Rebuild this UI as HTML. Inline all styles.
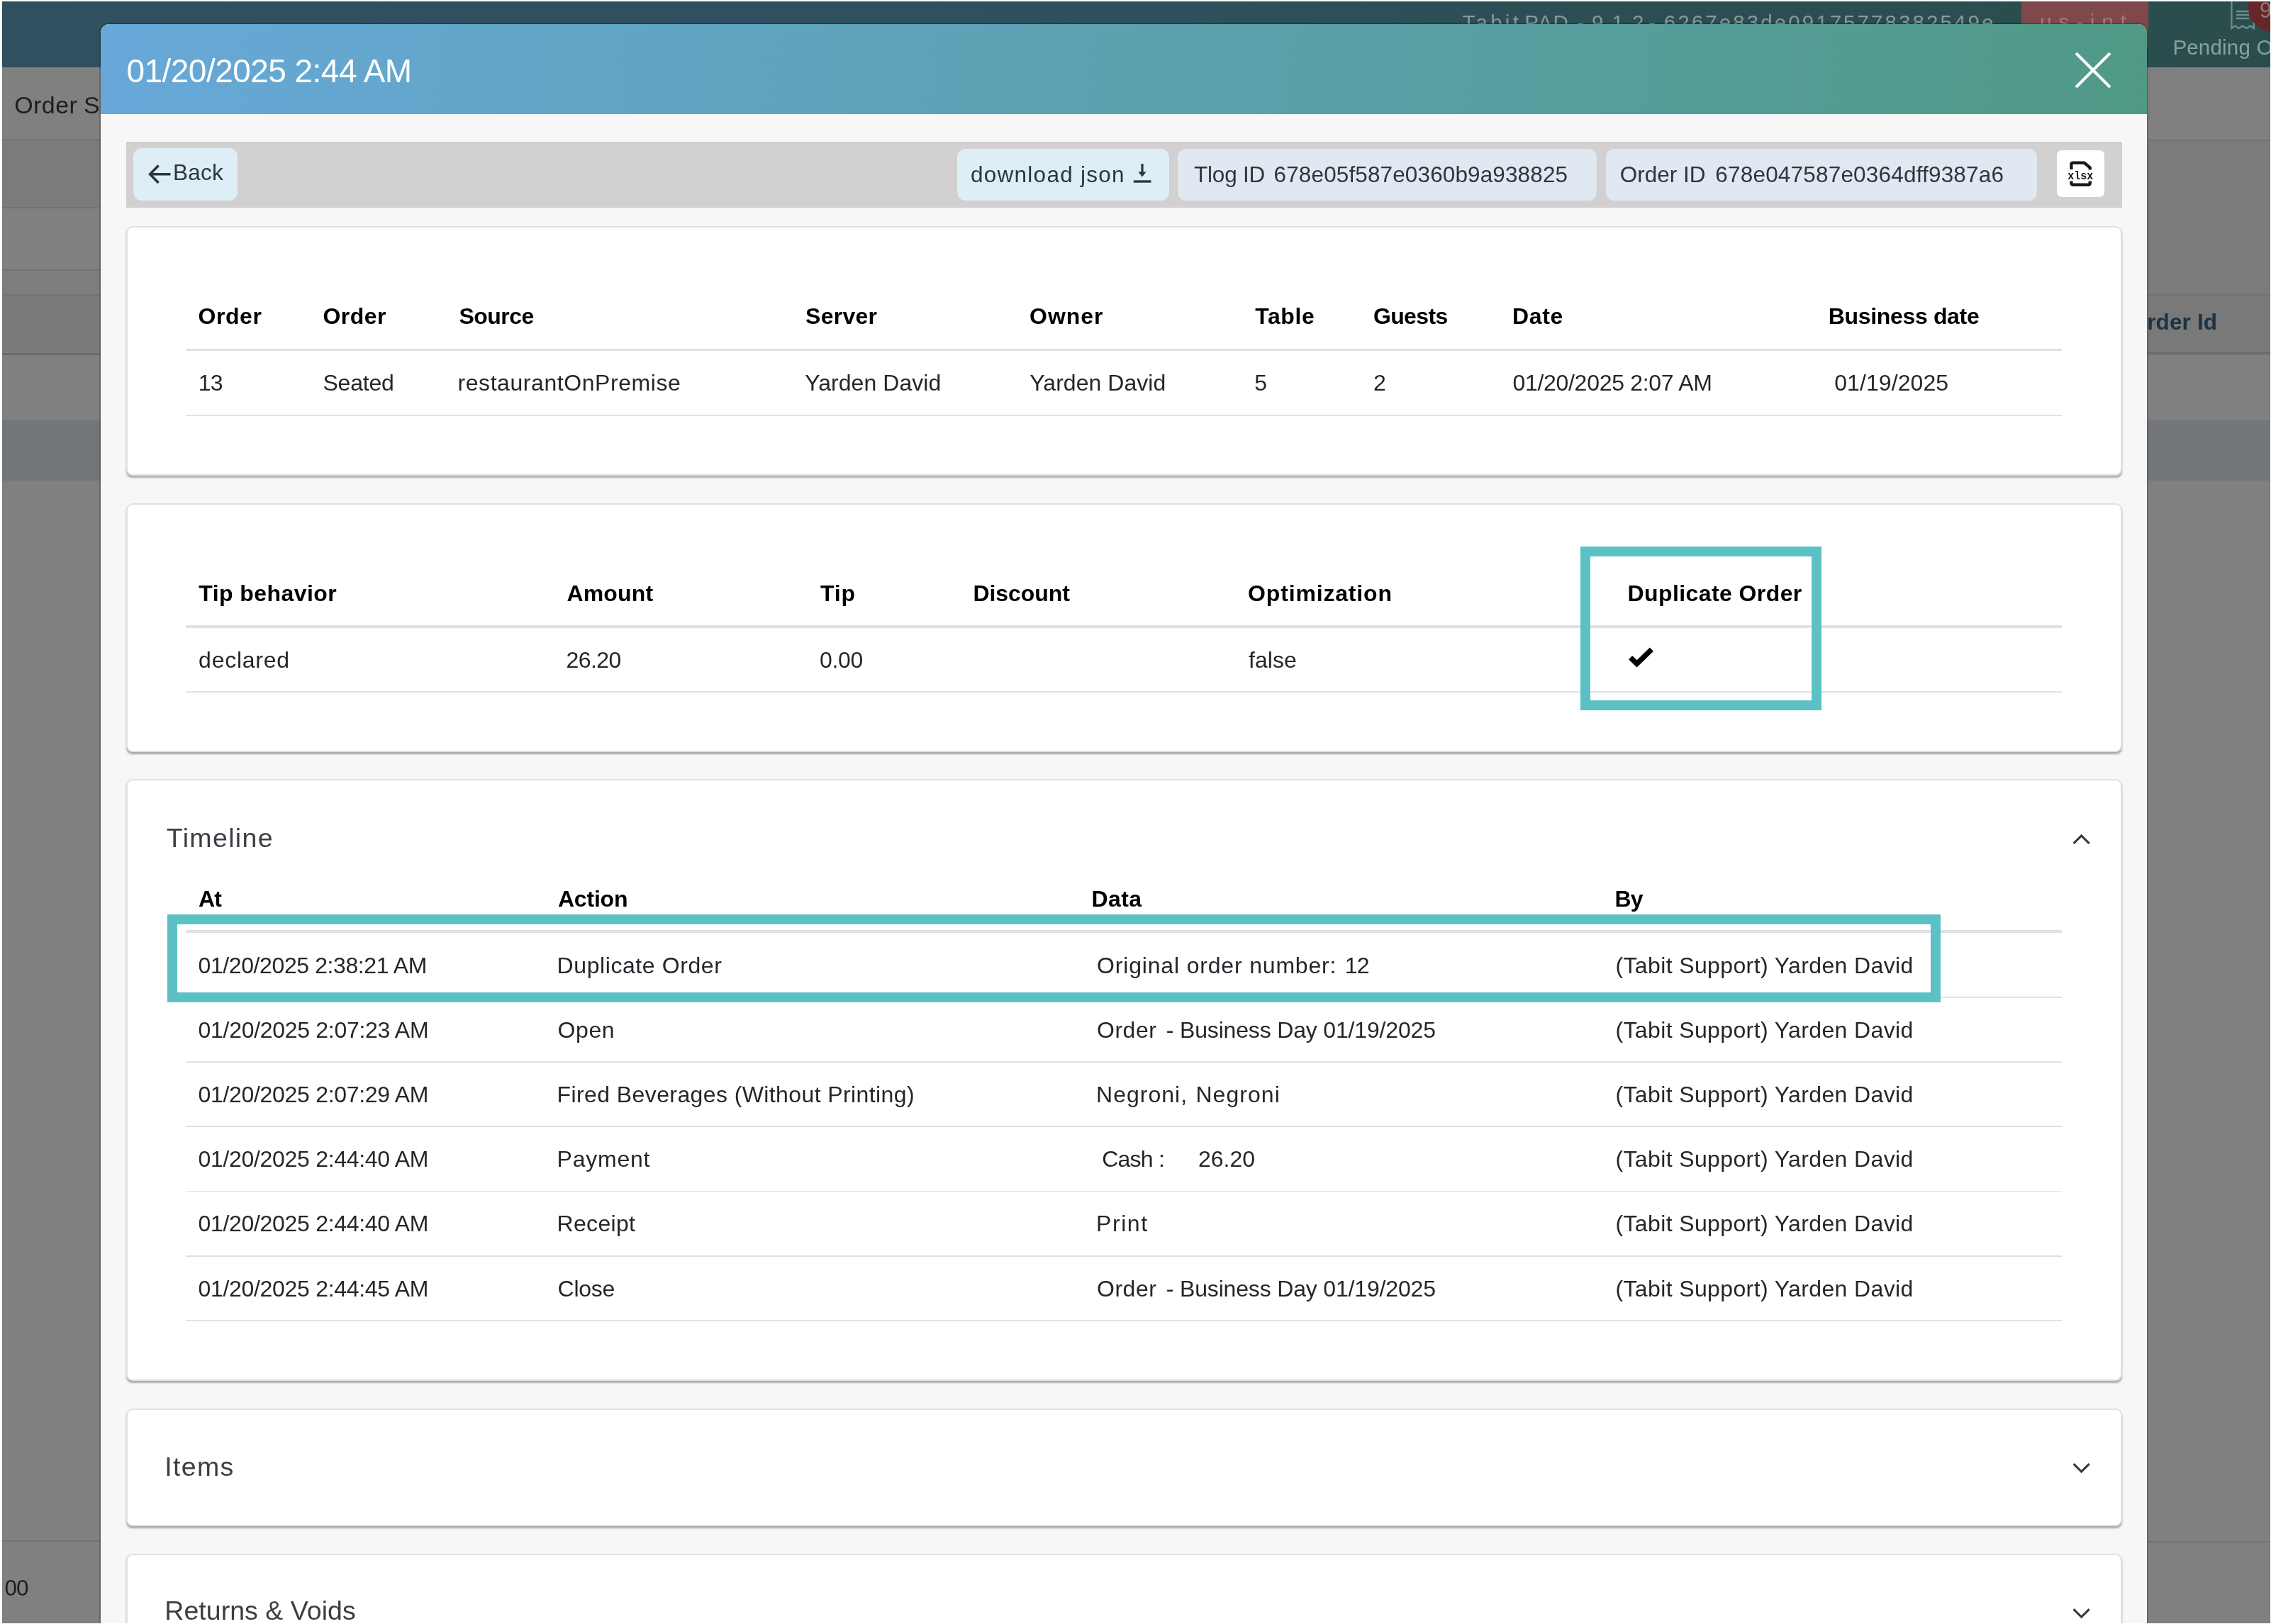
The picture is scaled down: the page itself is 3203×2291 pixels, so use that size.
<!DOCTYPE html>
<html lang="en"><head><meta charset="utf-8"><title>Order details</title>
<style>
html,body{margin:0;padding:0;background:#fff;}
body{width:3203px;height:2291px;position:relative;font-family:"Liberation Sans",sans-serif;}
#clip{position:absolute;left:3px;top:2px;width:3199px;height:2288px;overflow:hidden;}
#wrap{position:absolute;left:-3px;top:-2px;width:3203px;height:2291px;will-change:transform;}
.b{position:absolute;box-sizing:border-box;}
.t{position:absolute;white-space:pre;line-height:1;font-size:32px;color:#23272b;}
.bd{font-weight:700;color:#000;}
.mono{font-family:"Liberation Mono",monospace;}
.modal{background:#f7f7f7;border-radius:12px 12px 0 0;box-shadow:0 0 0 2px rgba(0,0,0,.2);}
.mhead{background:linear-gradient(93deg,#67a8d9 0%,#519986 100%);border-radius:12px 12px 0 0;}
.pill{border-radius:12px;}
.card{background:#fff;border:2px solid #e1e1e1;border-radius:9px;box-shadow:0 2.6px 2.4px -0.4px rgba(0,0,0,.31);}
.hl{border:14px solid #5bc1c4;}
.tb{color:#2f353b;}
.sec{color:#3a3f44;}
</style></head>
<body><div id="clip"><div id="wrap">
<div class="b" style="left:3.0px;top:2.0px;width:3199.0px;height:93.0px;background:linear-gradient(90deg,#31505f 0%,#2f5060 40%,#2b4e52 75%,#2a4d4c 100%)"></div>
<div class="b" style="left:3.0px;top:95.0px;width:3199.0px;height:2195.0px;background:#808080"></div>
<div class="b" style="left:3.0px;top:197.0px;width:139.0px;height:95.0px;background:#7b7b7b"></div>
<div class="b" style="left:3.0px;top:380.5px;width:139.0px;height:35.0px;background:#7d7d7d"></div>
<div class="b" style="left:3.0px;top:415.5px;width:139.0px;height:84.0px;background:#7a7a7a"></div>
<div class="b" style="left:3028.0px;top:197.0px;width:174.0px;height:218.0px;background:#7b7b7b"></div>
<div class="b" style="left:3028.0px;top:415.5px;width:174.0px;height:84.0px;background:#797979"></div>
<div class="b" style="left:3.0px;top:196.3px;width:139.0px;height:2px;background:#727272"></div>
<div class="b" style="left:3.0px;top:291.5px;width:139.0px;height:2px;background:#727272"></div>
<div class="b" style="left:3.0px;top:379.7px;width:139.0px;height:2px;background:#727272"></div>
<div class="b" style="left:3.0px;top:415.0px;width:139.0px;height:2px;background:#727272"></div>
<div class="b" style="left:3028.0px;top:196.6px;width:174.0px;height:2px;background:#727272"></div>
<div class="b" style="left:3028.0px;top:415.0px;width:174.0px;height:2px;background:#727272"></div>
<div class="b" style="left:3.0px;top:497.5px;width:139.0px;height:3px;background:#6b6b6b"></div>
<div class="b" style="left:3028.0px;top:497.0px;width:174.0px;height:3px;background:#6b6b6b"></div>
<div class="b" style="left:3.0px;top:593.0px;width:139.0px;height:85.0px;background:#72767a"></div>
<div class="b" style="left:3028.0px;top:593.0px;width:174.0px;height:85.0px;background:#72767a"></div>
<div class="b" style="left:3.0px;top:2173.0px;width:139.0px;height:2px;background:#727272"></div>
<div class="b" style="left:3028.0px;top:2174.0px;width:174.0px;height:2px;background:#727272"></div>
<span class="t r" style="left:20.2px;top:130.6px;font-size:34px;letter-spacing:0.45px;color:#1e1e1e">Order</span>
<span class="t r" style="left:118.1px;top:130.6px;font-size:34px;color:#1e1e1e;letter-spacing:-0.3px">Search</span>
<span class="t r" style="left:6.4px;top:2225.3px;font-size:31.5px;letter-spacing:-0.80px;color:#1e1e1e">00</span>
<span class="t bd" style="left:3003.5px;top:438.9px;font-size:31.5px;letter-spacing:0.15px;color:#1d3345">Order Id</span>
<span class="t r" style="left:2062.5px;top:16.5px;font-size:29.5px;letter-spacing:4.27px;color:#869a9b">Tabit</span>
<span class="t r" style="left:2150.3px;top:16.5px;font-size:29.5px;letter-spacing:1.50px;color:#869a9b">PAD</span>
<span class="t r" style="left:2224.0px;top:16.5px;font-size:29.5px;color:#869a9b">-</span>
<span class="t r" style="left:2245.0px;top:16.5px;font-size:29.5px;letter-spacing:1.95px;color:#869a9b">9.1.2</span>
<span class="t r" style="left:2325.0px;top:16.5px;font-size:29.5px;color:#869a9b">-</span>
<span class="t r" style="left:2346.8px;top:16.5px;font-size:29.5px;letter-spacing:3.08px;color:#869a9b">6267e83de09175778382549e</span>
<div class="b" style="left:2851.0px;top:2.0px;width:179.4px;height:66.4px;background:#7f484a"></div>
<span class="t r" style="left:2877.0px;top:16.2px;font-size:30px;letter-spacing:9.70px;color:#a07a7b">us-int</span>
<span class="t r" style="left:3064.4px;top:51.8px;font-size:29.5px;color:#8aa0a0;letter-spacing:0.2px">Pending Orders</span>
<svg class="b" style="left:3143px;top:0px" width="40" height="46" viewBox="0 0 40 46"><path d="M4.4 0 V40 L9.4 36.4 L14.6 40 L20 36.4 L25.4 40 L30.6 36.4 L35.8 40 V0 M11 16 H29 M11 21 H29 M11 26 H29" stroke="#6f8b8c" stroke-width="2.4" fill="none"/></svg>
<div class="b" style="left:3170.5px;top:-24.0px;width:69.0px;height:69.0px;background:#672629;border-radius:50%"></div>
<span class="t r" style="left:3187.0px;top:-1.2px;font-size:30.5px;color:#8b7b7c">9</span>
<div class="b modal" style="left:142.0px;top:34.0px;width:2886.0px;height:2260.0px;"></div>
<div class="b mhead" style="left:142.0px;top:34.0px;width:2886.0px;height:127.3px;"></div>
<span class="t r" style="left:178.5px;top:76.9px;font-size:46px;letter-spacing:-0.54px;color:#fff">01/20/2025 2:44 AM</span>
<svg class="b" style="left:2924.5px;top:71.5px" width="54" height="54" viewBox="0 0 54 54"><path d="M3 3 L51 51 M51 3 L3 51" stroke="#fff" stroke-width="4" fill="none"/></svg>
<div class="b" style="left:178.0px;top:200.0px;width:2814.5px;height:92.5px;background:#d2d0d1"></div>
<div class="b pill" style="left:188.0px;top:209.4px;width:147.2px;height:74.0px;background:#ddeef7"></div>
<span class="t r tb" style="left:244.0px;top:228.1px;font-size:31.5px;letter-spacing:0.24px;">Back</span>
<svg class="b" style="left:208px;top:230px" width="36" height="32" viewBox="0 0 36 32"><path d="M32.5 15.8 H4 M15.6 3.6 L3.6 15.8 L15.6 28" stroke="#2f353b" stroke-width="3.6" fill="none"/></svg>
<div class="b pill" style="left:1349.7px;top:209.6px;width:299.0px;height:73.3px;background:#ddeef7"></div>
<span class="t r tb" style="left:1369.0px;top:230.6px;font-size:31.5px;letter-spacing:1.26px;">download json</span>
<svg class="b" style="left:1596px;top:228px" width="30" height="32" viewBox="0 0 30 32"><path d="M15 3 V18" stroke="#2f353b" stroke-width="3.2" fill="none"/><path d="M9.4 14.4 L15 21.6 L20.6 14.4 Z" fill="#2f353b"/><path d="M2.8 28 H27.4" stroke="#2f353b" stroke-width="3.4" fill="none"/></svg>
<div class="b pill" style="left:1661.2px;top:209.6px;width:591.0px;height:73.3px;background:#e0e8f1"></div>
<span class="t r tb" style="left:1684.0px;top:230.8px;font-size:31.5px;letter-spacing:-0.21px;">Tlog ID</span>
<span class="t r tb" style="left:1796.6px;top:230.8px;font-size:31.5px;letter-spacing:0.12px;">678e05f587e0360b9a938825</span>
<div class="b pill" style="left:2265.3px;top:209.6px;width:608.0px;height:73.3px;background:#e0e8f1"></div>
<span class="t r tb" style="left:2284.8px;top:230.8px;font-size:31.5px;">Order ID</span>
<span class="t r tb" style="left:2419.3px;top:230.8px;font-size:31.5px;letter-spacing:0.19px;">678e047587e0364dff9387a6</span>
<div class="b" style="left:2900.6px;top:212.0px;width:67.0px;height:66.0px;background:#fff;border-radius:7px"></div>
<svg class="b" style="left:2912px;top:222px" width="46" height="46" viewBox="0 0 46 46"><path d="M9.4 17 V10 Q9.4 7.6 11.8 7.6 H27.6 L35.7 14.4 V17.4" stroke="#151515" stroke-width="4.3" fill="none" stroke-linejoin="round"/><path d="M9.4 33.6 V36 Q9.4 38.6 12 38.6 H33.2 Q35.7 38.6 35.7 36 V33.6" stroke="#151515" stroke-width="4.3" fill="none"/><text x="22.3" y="30.7" text-anchor="middle" textLength="36" lengthAdjust="spacingAndGlyphs" font-family="Liberation Mono, monospace" font-weight="700" font-size="17" fill="#151515">xlsx</text></svg>
<div class="b card" style="left:178.2px;top:318.5px;width:2814.4px;height:352.4px;"></div>
<span class="t bd" style="left:279.4px;top:430.1px;letter-spacing:0.60px;">Order</span>
<span class="t bd" style="left:455.5px;top:430.1px;letter-spacing:0.45px;">Order</span>
<span class="t bd" style="left:647.5px;top:430.1px;letter-spacing:-0.56px;">Source</span>
<span class="t bd" style="left:1136.1px;top:430.1px;letter-spacing:0.24px;">Server</span>
<span class="t bd" style="left:1452.1px;top:430.1px;letter-spacing:0.92px;">Owner</span>
<span class="t bd" style="left:1770.2px;top:430.1px;letter-spacing:0.60px;">Table</span>
<span class="t bd" style="left:1937.0px;top:430.1px;letter-spacing:-0.66px;">Guests</span>
<span class="t bd" style="left:2133.1px;top:430.1px;letter-spacing:0.65px;">Date</span>
<span class="t bd" style="left:2578.8px;top:430.1px;letter-spacing:-0.34px;">Business date</span>
<span class="t r" style="left:279.8px;top:524.4px;letter-spacing:-0.80px;">13</span>
<span class="t r" style="left:455.5px;top:524.4px;letter-spacing:-0.23px;">Seated</span>
<span class="t r" style="left:645.5px;top:524.4px;letter-spacing:0.57px;">restaurantOnPremise</span>
<span class="t r" style="left:1135.2px;top:524.4px;letter-spacing:0.05px;">Yarden David</span>
<span class="t r" style="left:1452.3px;top:524.4px;letter-spacing:0.04px;">Yarden David</span>
<span class="t r" style="left:1769.2px;top:524.4px;">5</span>
<span class="t r" style="left:1937.0px;top:524.4px;">2</span>
<span class="t r" style="left:2133.4px;top:524.4px;letter-spacing:-0.29px;">01/20/2025 2:07 AM</span>
<span class="t r" style="left:2587.2px;top:524.4px;letter-spacing:0.08px;">01/19/2025</span>
<div class="b" style="left:261.8px;top:491.6px;width:2646.7px;height:3.5px;background:#dee2e6"></div>
<div class="b" style="left:261.8px;top:585.0px;width:2646.7px;height:1.9px;background:#dee2e6"></div>
<div class="b card" style="left:178.2px;top:710.0px;width:2814.4px;height:351.4px;"></div>
<span class="t bd" style="left:280.3px;top:820.7px;letter-spacing:0.44px;">Tip behavior</span>
<span class="t bd" style="left:799.4px;top:820.7px;letter-spacing:0.16px;">Amount</span>
<span class="t bd" style="left:1157.0px;top:820.7px;letter-spacing:0.77px;">Tip</span>
<span class="t bd" style="left:1372.5px;top:820.7px;letter-spacing:-0.08px;">Discount</span>
<span class="t bd" style="left:1760.1px;top:820.7px;letter-spacing:0.83px;">Optimization</span>
<span class="t bd" style="left:2295.5px;top:820.7px;letter-spacing:0.41px;">Duplicate Order</span>
<span class="t r" style="left:280.1px;top:914.9px;letter-spacing:0.74px;">declared</span>
<span class="t r" style="left:798.4px;top:914.9px;letter-spacing:-0.52px;">26.20</span>
<span class="t r" style="left:1156.0px;top:914.9px;letter-spacing:-0.36px;">0.00</span>
<span class="t r" style="left:1761.1px;top:914.9px;letter-spacing:0.03px;">false</span>
<div class="b" style="left:261.8px;top:882.0px;width:2646.7px;height:3.5px;background:#dee2e6"></div>
<div class="b" style="left:261.8px;top:975.2px;width:2646.7px;height:1.9px;background:#dee2e6"></div>
<svg class="b" style="left:2294px;top:910px" width="42" height="34" viewBox="0 0 42 34"><path d="M5.6 17.6 L14.6 26.4 L35.4 6.2" stroke="#000" stroke-width="7.4" fill="none"/></svg>
<div class="b hl" style="left:2229.0px;top:771.0px;width:340.0px;height:231.0px;"></div>
<div class="b card" style="left:178.2px;top:1099.0px;width:2814.4px;height:849.4px;"></div>
<span class="t r sec" style="left:234.8px;top:1163.6px;font-size:37.5px;letter-spacing:1.36px;">Timeline</span>
<svg class="b" style="left:2920px;top:1172px" width="32" height="24" viewBox="0 0 32 24"><path d="M4.6 17.8 L15.6 7 L26.6 17.8" stroke="#33383d" stroke-width="3.1" fill="none"/></svg>
<span class="t bd" style="left:279.9px;top:1252.2px;letter-spacing:-0.80px;">At</span>
<span class="t bd" style="left:786.9px;top:1252.2px;letter-spacing:-0.18px;">Action</span>
<span class="t bd" style="left:1539.4px;top:1252.2px;letter-spacing:0.45px;">Data</span>
<span class="t bd" style="left:2277.4px;top:1252.2px;letter-spacing:-0.80px;">By</span>
<div class="b" style="left:261.8px;top:1312.2px;width:2646.7px;height:3.5px;background:#dee2e6"></div>
<span class="t r" style="left:279.6px;top:1345.6px;letter-spacing:-0.41px;">01/20/2025 2:38:21 AM</span>
<span class="t r" style="left:785.6px;top:1345.6px;letter-spacing:0.58px;">Duplicate Order</span>
<span class="t r" style="left:1547.1px;top:1345.6px;letter-spacing:0.82px;">Original order number:</span>
<span class="t r" style="left:1896.8px;top:1345.6px;letter-spacing:-0.80px;">12</span>
<span class="t r" style="left:2278.4px;top:1345.6px;letter-spacing:0.38px;">(Tabit Support) Yarden David</span>
<div class="b" style="left:261.8px;top:1405.9px;width:2646.7px;height:1.9px;background:#dee2e6"></div>
<span class="t r" style="left:279.6px;top:1436.8px;letter-spacing:-0.30px;">01/20/2025 2:07:23 AM</span>
<span class="t r" style="left:786.6px;top:1436.8px;letter-spacing:0.57px;">Open</span>
<span class="t r" style="left:1547.1px;top:1436.8px;letter-spacing:0.49px;">Order</span>
<span class="t r" style="left:1644.8px;top:1436.8px;letter-spacing:-0.17px;">- Business Day 01/19/2025</span>
<span class="t r" style="left:2278.4px;top:1436.8px;letter-spacing:0.38px;">(Tabit Support) Yarden David</span>
<div class="b" style="left:261.8px;top:1497.1px;width:2646.7px;height:1.9px;background:#dee2e6"></div>
<span class="t r" style="left:279.4px;top:1528.0px;letter-spacing:-0.30px;">01/20/2025 2:07:29 AM</span>
<span class="t r" style="left:785.6px;top:1528.0px;letter-spacing:0.40px;">Fired Beverages (Without Printing)</span>
<span class="t r" style="left:1546.1px;top:1528.0px;letter-spacing:1.01px;">Negroni,</span>
<span class="t r" style="left:1686.4px;top:1528.0px;letter-spacing:1.06px;">Negroni</span>
<span class="t r" style="left:2278.4px;top:1528.0px;letter-spacing:0.38px;">(Tabit Support) Yarden David</span>
<div class="b" style="left:261.8px;top:1588.4px;width:2646.7px;height:1.9px;background:#dee2e6"></div>
<span class="t r" style="left:279.4px;top:1619.2px;letter-spacing:-0.30px;">01/20/2025 2:44:40 AM</span>
<span class="t r" style="left:785.6px;top:1619.2px;letter-spacing:0.75px;">Payment</span>
<span class="t r" style="left:1554.2px;top:1619.2px;letter-spacing:-0.78px;">Cash :</span>
<span class="t r" style="left:1690.1px;top:1619.2px;letter-spacing:-0.05px;">26.20</span>
<span class="t r" style="left:2278.4px;top:1619.2px;letter-spacing:0.38px;">(Tabit Support) Yarden David</span>
<div class="b" style="left:261.8px;top:1679.6px;width:2646.7px;height:1.9px;background:#dee2e6"></div>
<span class="t r" style="left:279.4px;top:1710.4px;letter-spacing:-0.30px;">01/20/2025 2:44:40 AM</span>
<span class="t r" style="left:785.6px;top:1710.4px;letter-spacing:0.30px;">Receipt</span>
<span class="t r" style="left:1546.1px;top:1710.4px;letter-spacing:1.55px;">Print</span>
<span class="t r" style="left:2278.4px;top:1710.4px;letter-spacing:0.38px;">(Tabit Support) Yarden David</span>
<div class="b" style="left:261.8px;top:1770.9px;width:2646.7px;height:1.9px;background:#dee2e6"></div>
<span class="t r" style="left:279.4px;top:1801.6px;letter-spacing:-0.30px;">01/20/2025 2:44:45 AM</span>
<span class="t r" style="left:786.6px;top:1801.6px;letter-spacing:-0.30px;">Close</span>
<span class="t r" style="left:1547.1px;top:1801.6px;letter-spacing:0.49px;">Order</span>
<span class="t r" style="left:1644.8px;top:1801.6px;letter-spacing:-0.17px;">- Business Day 01/19/2025</span>
<span class="t r" style="left:2278.4px;top:1801.6px;letter-spacing:0.38px;">(Tabit Support) Yarden David</span>
<div class="b" style="left:261.8px;top:1862.1px;width:2646.7px;height:1.9px;background:#dee2e6"></div>
<div class="b hl" style="left:236.0px;top:1290.0px;width:2501.0px;height:124.0px;"></div>
<div class="b card" style="left:178.2px;top:1986.6px;width:2814.4px;height:166.8px;"></div>
<span class="t r sec" style="left:232.3px;top:2050.7px;font-size:37.5px;letter-spacing:1.32px;">Items</span>
<svg class="b" style="left:2920px;top:2058.5px" width="32" height="24" viewBox="0 0 32 24"><path d="M4.6 6.2 L15.6 17 L26.6 6.2" stroke="#33383d" stroke-width="3.1" fill="none"/></svg>
<div class="b card" style="left:178.2px;top:2192.2px;width:2814.4px;height:167.0px;"></div>
<span class="t r sec" style="left:232.3px;top:2254.2px;font-size:37.5px;letter-spacing:0.04px;">Returns &amp; Voids</span>
<svg class="b" style="left:2920px;top:2264px" width="32" height="24" viewBox="0 0 32 24"><path d="M4.6 6.2 L15.6 17 L26.6 6.2" stroke="#33383d" stroke-width="3.1" fill="none"/></svg>
</div></div></body></html>
